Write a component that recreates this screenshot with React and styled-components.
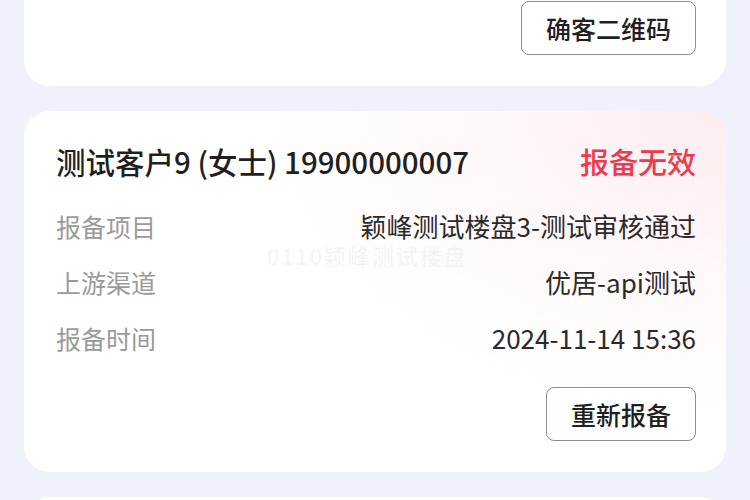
import React from "react";
import styled, { createGlobalStyle } from "styled-components";

const GlobalStyle = createGlobalStyle`
  html, body {
    margin: 0;
    padding: 0;
    background: #f0f2fb;
    font-family: "Noto Sans CJK SC", "Noto Sans", sans-serif;
    overflow: hidden;
  }
`;

const Page = styled.div`
  display: flex;
  flex-direction: column;
  gap: 25px;
  padding: 0 24px;
  margin-top: -30px;
`;

const Card = styled.div`
  position: relative;
  background: ${(p) =>
    p.$tint
      ? "radial-gradient(ellipse 460px 300px at 100% 0%, #fdecef 0%, #fff6f7 45%, #ffffff 100%)"
      : "#ffffff"};
  border-radius: 26px;
  padding: ${(p) => (p.$tight ? "31px 30px 31px 32px" : "30px 30px 31px 32px")};
  display: flex;
  flex-direction: column;
`;

const Header = styled.div`
  display: flex;
  justify-content: space-between;
  align-items: center;
  height: 40px;
  margin-bottom: 17px;
`;

const Title = styled.div`
  font-size: 29.5px;
  color: #1f1f1f;
  font-weight: 500;
`;

const Status = styled.div`
  font-size: 29px;
  color: #ec3a4e;
  font-weight: 500;
`;

const Row = styled.div`
  display: flex;
  justify-content: space-between;
  align-items: center;
  height: 56px;
  line-height: 1.2;
`;

const Label = styled.span`
  font-size: 25px;
  color: #9a9a9a;
`;

const Value = styled.span`
  font-size: 26px;
  color: #2a2a2a;
`;

const Actions = styled.div`
  display: flex;
  justify-content: flex-end;
  margin-top: ${(p) => p.$gap || 0}px;
`;

const Button = styled.button`
  font-family: inherit;
  height: 54px;
  padding: 0 24px;
  border: 1px solid #8e8e8e;
  border-radius: 8px;
  background: #fff;
  color: #1f1f1f;
  font-size: 25px;
  font-weight: 500;
`;

const Watermark = styled.div`
  position: absolute;
  left: 243px;
  top: 133px;
  font-size: 22px;
  line-height: 22px;
  letter-spacing: 2px;
  color: rgba(236, 236, 242, 0.6);
  pointer-events: none;
`;

const rows = [
  ["报备项目", "颖峰测试楼盘3-测试审核通过"],
  ["上游渠道", "优居-api测试"],
  ["报备时间", "2024-11-14 15:36"],
];

export default function App() {
  return (
    <>
      <GlobalStyle />
      <Page>
        <Card $tight>
          <Actions>
            <Button>确客二维码</Button>
          </Actions>
        </Card>
        <Card $tint>
          <Header>
            <Title>测试客户9 (女士) 19900000007</Title>
            <Status>报备无效</Status>
          </Header>
          {rows.map(([k, v]) => (
            <Row key={k}>
              <Label>{k}</Label>
              <Value>{v}</Value>
            </Row>
          ))}
          <Actions $gap={21}>
            <Button>重新报备</Button>
          </Actions>
          <Watermark>0110颖峰测试楼盘</Watermark>
        </Card>
        <Card>
          <Header />
        </Card>
      </Page>
    </>
  );
}
